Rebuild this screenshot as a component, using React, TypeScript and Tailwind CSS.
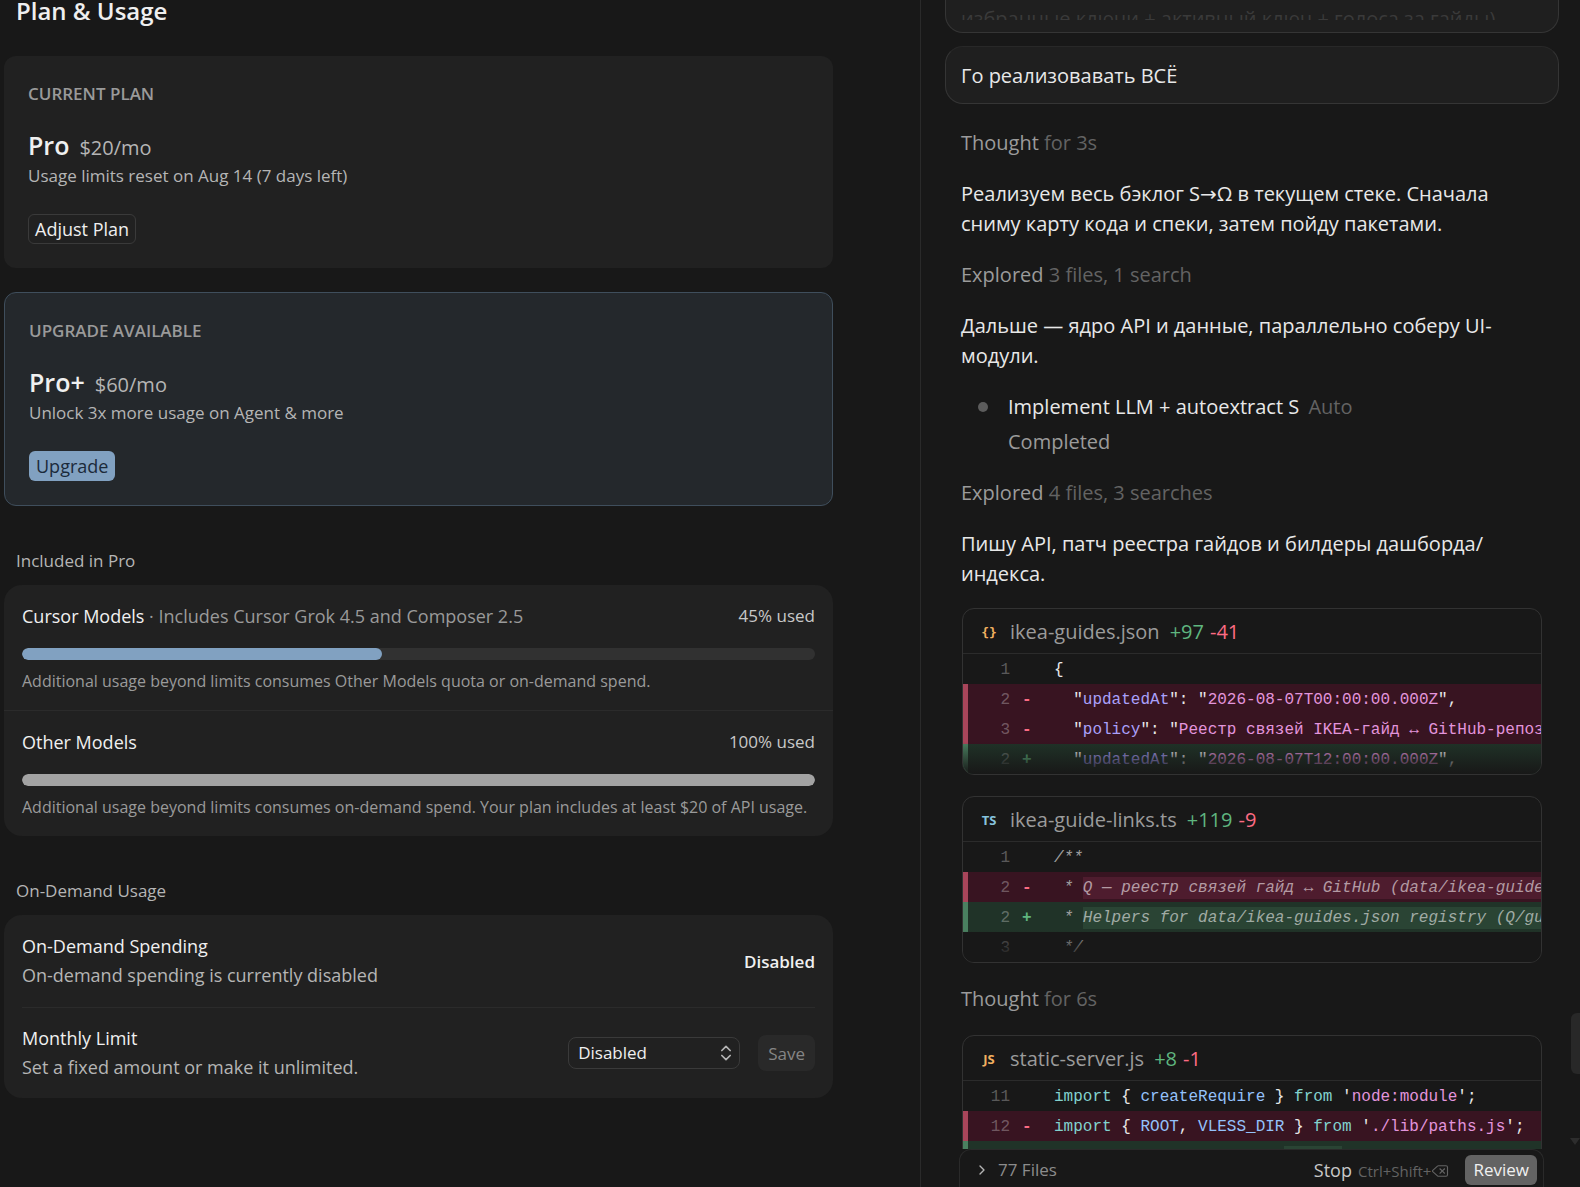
import { useState } from "react";
import type { ReactNode } from "react";
import { ChevronRight, ChevronsUpDown, Delete } from "lucide-react";

type Token = [string, string?];
type Line = { no?: number; kind?: "add" | "del"; tokens: Token[] };

const KEY = "text-[#aaa0fa]";
const STR = "text-[#e394dc]";
const KW = "text-[#82d2ce]";
const VAR = "text-[#94c1fa]";
const CMT = "italic text-[#a0a0a0]";

const jsonLines: Line[] = [
  { no: 1, tokens: [["{"]] },
  { no: 2, kind: "del", tokens: [['  "'], ["updatedAt", KEY], ['": "'], ["2026-08-07T00:00:00.000Z", STR], ['",']] },
  { no: 3, kind: "del", tokens: [['  "'], ["policy", KEY], ['": "'], ["Реестр связей IKEA-гайд ↔ GitHub-репоз", STR]] },
  { no: 2, kind: "add", tokens: [['  "'], ["updatedAt", KEY], ['": "'], ["2026-08-07T12:00:00.000Z", STR], ['",']] },
];

const tsLines: Line[] = [
  { no: 1, tokens: [["/**", CMT]] },
  { no: 2, kind: "del", tokens: [[" * ", CMT], ["Q — реестр связей гайд ↔ GitHub (data/ikea-guide", "py-[2px] italic text-[#b39aa3] bg-[#4e1c2e]"]] },
  { no: 2, kind: "add", tokens: [[" * ", CMT], ["Helpers for data/ikea-guides.json registry (Q/gu", "py-[2px] italic text-[#a0aba4] bg-[#2a4434]"]] },
  { no: 3, tokens: [[" */", CMT]] },
];

const jsLines: Line[] = [
  { no: 11, tokens: [["import", KW], [" { "], ["createRequire", VAR], [" } "], ["from", KW], [" '"], ["node:module", STR], ["';"]] },
  { no: 12, kind: "del", tokens: [["import", KW], [" { "], ["ROOT", VAR], [", "], ["VLESS_DIR", VAR], [" } "], ["from", KW], [" '"], ["./lib/paths.js", STR], ["';"]] },
  { kind: "add", tokens: [["                        "], ["      ", "py-[2px] bg-[#2a4434]"]] },
];

function DiffLine({ line }: { line: Line }) {
  const row =
    line.kind === "del"
      ? "bg-[#381421] border-[#a8455a]"
      : line.kind === "add"
        ? "bg-[#203328] border-[#4a8060]"
        : "border-transparent";
  return (
    <div className={`flex h-[30px] border-l-[5px] whitespace-pre ${row}`}>
      <span className="w-[42px] shrink-0 text-right text-white/30">{line.no}</span>
      <span className={`w-[44px] shrink-0 pl-3 font-bold ${line.kind === "del" ? "text-[#fc6b83]" : "text-[#5fb57f]"}`}>
        {line.no && line.kind ? (line.kind === "del" ? "-" : "+") : ""}
      </span>
      <code className="font-[inherit]">
        {line.tokens.map(([text, cls], i) => (
          <span key={i} className={cls}>{text}</span>
        ))}
      </code>
    </div>
  );
}

type DiffCardProps = {
  icon: ReactNode;
  name: string;
  added: number;
  removed: number;
  lines: Line[];
};

function DiffCard({ icon, name, added, removed, lines }: DiffCardProps) {
  return (
    <div className="relative mx-[17px] h-[167px] overflow-hidden rounded-xl border border-[#323232]">
      <div className="flex h-[45px] items-center border-b border-[#2b2b2b] pt-[2px] pl-[13px] text-[20px]">
        <span className="mr-2 w-[26px] shrink-0 text-center text-[13px] font-bold">{icon}</span>
        <span className="text-[#9b9b9b]">{name}</span>
        <span className="ml-[10px] text-[#5fb57f]">+{added}</span>
        <span className="ml-[6px] text-[#fc6b83]">-{removed}</span>
      </div>
      <div className="font-['Liberation_Mono','DejaVu_Sans_Mono',monospace] text-[16px] leading-[32px] text-[#e8e8e8]">
        {lines.map((line, i) => (
          <DiffLine key={i} line={line} />
        ))}
      </div>
      <div className="absolute inset-x-0 bottom-0 h-8 bg-linear-to-b from-[#181818]/0 to-[#181818]" />
    </div>
  );
}

function Step({ label, detail }: { label: string; detail: string }) {
  return (
    <p className="px-4 text-[#9b9b9b]">
      {label} <span className="text-[#636363]">{detail}</span>
    </p>
  );
}

type UsageRowProps = { title: string; note?: string; used: number; hint: string; color: string };

function UsageRow({ title, note, used, hint, color }: UsageRowProps) {
  return (
    <div className="px-[18px] py-[17px]">
      <div className="flex items-center justify-between leading-7">
        <p className="text-[18px] text-[#f0f0f0]">
          {title}
          {note && <span className="text-[#9a9a9a]"> · {note}</span>}
        </p>
        <span className="text-[17px] text-[#c8c8c8]">{Math.floor(used)}% used</span>
      </div>
      <div
        role="progressbar"
        aria-label={title}
        aria-valuenow={used}
        className="mt-[18px] h-3 overflow-hidden rounded-full bg-[#313131]"
      >
        <div className={`h-full rounded-md ${color}`} style={{ width: `${used}%` }} />
      </div>
      <p className="mt-[9px] text-[16px] leading-6 text-[#9a9a9a]">{hint}</p>
    </div>
  );
}

function PlanHeading({ label, name, price, note }: { label: string; name: string; price: string; note: string }) {
  return (
    <>
      <h2 className="text-[17px] leading-7 font-semibold text-[#9a9a9a]">{label}</h2>
      <p className="mt-5 flex items-baseline gap-[10px]">
        <span className="text-[25px] leading-[34px] font-semibold text-[#f0f0f0]">{name}</span>
        <span className="text-[20px] leading-7 text-[#b5b5b5]">{price}</span>
      </p>
      <p className="text-[17px] leading-7 text-[#b5b5b5]">{note}</p>
    </>
  );
}

function PlanPage() {
  const [limit, setLimit] = useState("Disabled");

  return (
    <main className="min-w-0 flex-1 overflow-hidden pr-[87px] pl-1">
      <h1 className="mb-[34px] pl-3 text-[24px] leading-[22px] font-semibold text-[#efefef]">Plan &amp; Usage</h1>

      <section className="rounded-xl bg-[#212121] p-6">
        <PlanHeading label="CURRENT PLAN" name="Pro" price="$20/mo" note="Usage limits reset on Aug 14 (7 days left)" />
        <button className="mt-6 block h-[30px] rounded-md border border-[#3a3a3a] px-[6px] text-[18px] leading-[28px] text-[#efefef]">
          Adjust Plan
        </button>
      </section>

      <section className="mt-6 rounded-xl border border-[#3f4e5c] bg-[#24282c] p-6">
        <PlanHeading label="UPGRADE AVAILABLE" name="Pro+" price="$60/mo" note="Unlock 3x more usage on Agent & more" />
        <button className="mt-6 block h-[30px] rounded-md bg-[#81a1c1] px-[7px] text-[18px] leading-[30px] text-[#1b2a3a]">
          Upgrade
        </button>
      </section>

      <h2 className="mt-[41px] mb-[10px] pl-3 text-[17px] leading-7 text-[#b5b5b5]">Included in Pro</h2>
      <section className="divide-y divide-[#2b2b2b] rounded-[18px] bg-[#212121]">
        <UsageRow
          title="Cursor Models"
          note="Includes Cursor Grok 4.5 and Composer 2.5"
          used={45.4}
          hint="Additional usage beyond limits consumes Other Models quota or on-demand spend."
          color="bg-[#81a1c1]"
        />
        <UsageRow
          title="Other Models"
          used={100}
          hint="Additional usage beyond limits consumes on-demand spend. Your plan includes at least $20 of API usage."
          color="bg-[#a3a3a3]"
        />
      </section>

      <h2 className="mt-[41px] mb-[10px] pl-3 text-[17px] leading-7 text-[#b5b5b5]">On-Demand Usage</h2>
      <section className="rounded-[18px] bg-[#212121] px-[18px] text-[18px] leading-[29px]">
        <div className="flex items-center justify-between border-b border-[#2b2b2b] py-[17px]">
          <div>
            <h3 className="text-[#f0f0f0]">On-Demand Spending</h3>
            <p className="text-[#b5b5b5]">On-demand spending is currently disabled</p>
          </div>
          <span className="text-[17px] font-semibold text-[#f0f0f0]">Disabled</span>
        </div>
        <div className="flex items-center py-4">
          <div className="flex-1">
            <label htmlFor="limit" className="block text-[#f0f0f0]">Monthly Limit</label>
            <p className="text-[#b5b5b5]">Set a fixed amount or make it unlimited.</p>
          </div>
          <div className="relative">
            <select
              id="limit"
              value={limit}
              onChange={(e) => setLimit(e.target.value)}
              className="block h-8 w-[172px] appearance-none rounded-lg border border-[#3a3a3a] bg-transparent pl-[9px] text-[17px] leading-[28px] text-[#efefef]"
            >
              <option>Disabled</option>
              <option>Fixed</option>
              <option>Unlimited</option>
            </select>
            <ChevronsUpDown className="pointer-events-none absolute top-[6px] right-1 size-5 text-[#b5b5b5]" />
          </div>
          <button disabled className="ml-[18px] h-9 rounded-lg bg-[#292929] px-[10px] text-[17px] text-[#858585]">Save</button>
        </div>
      </section>
    </main>
  );
}

function ChatPanel() {
  return (
    <aside className="relative flex w-[660px] shrink-0 flex-col border-l border-[#2a2a2a]">
      <div className="min-h-0 flex-1 overflow-hidden pr-[21px] pl-6 text-[20px] leading-[30px] text-[#e8e8e8]">
        <div className="h-[33px] rounded-b-[18px] border border-t-0 border-[#353535] bg-[#1f1f1f] px-[15px]">
          <div className="h-5 overflow-hidden pt-1 text-[#3a3a3a]">избранные ключи + активный ключ + голоса за гайды)</div>
        </div>
        <div className="mt-[13px] rounded-[18px] border border-[#353535] border-t-[#282828] bg-[#1f1f1f] px-[15px] pt-[14px] pb-3">
          Го реализовавать ВСЁ
        </div>

        <div className="mt-6 space-y-[21px]">
          <Step label="Thought" detail="for 3s" />
          <p className="px-4">Реализуем весь бэклог S→Ω в текущем стеке. Сначала сниму карту кода и спеки, затем пойду пакетами.</p>
          <Step label="Explored" detail="3 files, 1 search" />
          <p className="px-4">Дальше — ядро API и данные, параллельно соберу UI-модули.</p>
          <div className="flex px-4">
            <span className="mt-[10px] mr-5 ml-[17px] size-[10px] shrink-0 rounded-full bg-[#5c5c5c]" />
            <div>
              <p>Implement LLM + autoextract S <span className="ml-1 text-[#636363]">Auto</span></p>
              <p className="mt-[5px] text-[#9b9b9b]">Completed</p>
            </div>
          </div>
          <Step label="Explored" detail="4 files, 3 searches" />
          <p className="px-4">Пишу API, патч реестра гайдов и билдеры дашборда/<wbr />индекса.</p>
        </div>

        <div className="mt-[19px] space-y-[21px]">
          <DiffCard
            icon={<span className="font-['DejaVu_Sans_Mono',monospace] text-[#f0b060]">{"{}"}</span>}
            name="ikea-guides.json"
            added={97}
            removed={41}
            lines={jsonLines}
          />
          <DiffCard
            icon={<span className="text-[#87c3dd]">TS</span>}
            name="ikea-guide-links.ts"
            added={119}
            removed={9}
            lines={tsLines}
          />
          <Step label="Thought" detail="for 6s" />
          <DiffCard
            icon={<span className="text-[#f0b060]">JS</span>}
            name="static-server.js"
            added={8}
            removed={1}
            lines={jsLines}
          />
        </div>
      </div>

      <footer className="mr-9 ml-[38px] flex h-[38px] shrink-0 items-center rounded-t-xl border border-b-0 border-[#2a2a2a] pt-[3px] pr-[6px] pl-[14px]">
        <button className="flex items-center gap-2 text-[17px] text-[#8c8c8c]">
          <ChevronRight className="size-4 text-[#b5b5b5]" />
          77 Files
        </button>
        <button className="ml-auto flex items-baseline gap-[6px] text-[18px] text-[#c8c8c8]">
          Stop
          <kbd className="flex items-center font-[inherit] text-[15px] text-[#636363]">
            Ctrl+Shift+<Delete className="size-[18px]" strokeWidth={1.5} />
          </kbd>
        </button>
        <button className="ml-4 h-[30px] rounded-md bg-[#636363] px-2 text-[17px] text-[#f0f0f0]">Review</button>
      </footer>

      {/* scrollbar */}
      <div className="absolute top-[1013px] right-0 h-[61px] w-[9px] rounded-l-md bg-[#282828]" />
      <div className="absolute top-[1138px] right-0 border-x-[5px] border-t-[7px] border-x-transparent border-t-[#2d2d2d]" />
    </aside>
  );
}

export default function App() {
  return (
    <div className="flex h-screen overflow-hidden bg-[#181818] font-['Open_Sans','Noto_Sans','DejaVu_Sans',sans-serif]">
      <PlanPage />
      <ChatPanel />
    </div>
  );
}
